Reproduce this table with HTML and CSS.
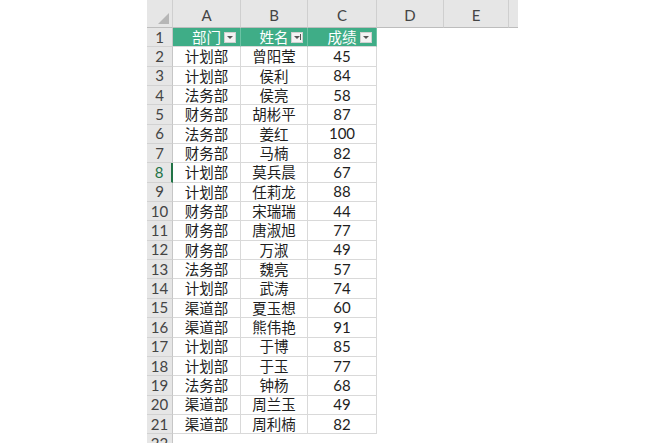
FILE: index.html
```html
<!DOCTYPE html>
<html lang="zh">
<head>
<meta charset="utf-8">
<link rel="stylesheet" href="styles.css">
</head>
<body>
<div class="sheet">
  <div class="corner"><span class="tri"></span></div>
  <div class="colh">A</div>
  <div class="colh">B</div>
  <div class="colh">C</div>
  <div class="colh">D</div>
  <div class="colh">E</div>
  <div class="colh stub"></div>

  <div class="rh">1</div>
  <div class="hd">部门<span class="fb"><span class="arr"></span></span></div>
  <div class="hd">姓名<span class="fb"><span class="arr"></span><span class="sort"></span></span></div>
  <div class="hd">成绩<span class="fb"><span class="arr"></span></span></div>
  <div class="void"></div>

  <div class="rh">2</div><div class="c">计划部</div><div class="c">曾阳莹</div><div class="c n">45</div><div class="void"></div>
  <div class="rh">3</div><div class="c">计划部</div><div class="c">侯利</div><div class="c n">84</div><div class="void"></div>
  <div class="rh">4</div><div class="c">法务部</div><div class="c">侯亮</div><div class="c n">58</div><div class="void"></div>
  <div class="rh">5</div><div class="c">财务部</div><div class="c">胡彬平</div><div class="c n">87</div><div class="void"></div>
  <div class="rh">6</div><div class="c">法务部</div><div class="c">姜红</div><div class="c n">100</div><div class="void"></div>
  <div class="rh">7</div><div class="c">财务部</div><div class="c">马楠</div><div class="c n">82</div><div class="void"></div>
  <div class="rh sel">8</div><div class="c">计划部</div><div class="c">莫兵晨</div><div class="c n">67</div><div class="void"></div>
  <div class="rh">9</div><div class="c">计划部</div><div class="c">任莉龙</div><div class="c n">88</div><div class="void"></div>
  <div class="rh">10</div><div class="c">财务部</div><div class="c">宋瑞瑞</div><div class="c n">44</div><div class="void"></div>
  <div class="rh">11</div><div class="c">财务部</div><div class="c">唐淑旭</div><div class="c n">77</div><div class="void"></div>
  <div class="rh">12</div><div class="c">财务部</div><div class="c">万淑</div><div class="c n">49</div><div class="void"></div>
  <div class="rh">13</div><div class="c">法务部</div><div class="c">魏亮</div><div class="c n">57</div><div class="void"></div>
  <div class="rh">14</div><div class="c">计划部</div><div class="c">武涛</div><div class="c n">74</div><div class="void"></div>
  <div class="rh">15</div><div class="c">渠道部</div><div class="c">夏玉想</div><div class="c n">60</div><div class="void"></div>
  <div class="rh">16</div><div class="c">渠道部</div><div class="c">熊伟艳</div><div class="c n">91</div><div class="void"></div>
  <div class="rh">17</div><div class="c">计划部</div><div class="c">于博</div><div class="c n">85</div><div class="void"></div>
  <div class="rh">18</div><div class="c">计划部</div><div class="c">于玉</div><div class="c n">77</div><div class="void"></div>
  <div class="rh">19</div><div class="c">法务部</div><div class="c">钟杨</div><div class="c n">68</div><div class="void"></div>
  <div class="rh">20</div><div class="c">渠道部</div><div class="c">周兰玉</div><div class="c n">49</div><div class="void"></div>
  <div class="rh">21</div><div class="c">渠道部</div><div class="c">周利楠</div><div class="c n">82</div><div class="void"></div>
  <div class="rh">22</div><div class="void3"></div>
</div>
</body>
</html>
```
FILE: styles.css
```css
html, body {
  margin: 0;
  padding: 0;
  background: #ffffff;
  overflow: hidden;
}
body {
  width: 664px;
  height: 443px;
}
.sheet {
  margin-left: 147px;
  display: grid;
  grid-template-columns: 26px 68px 67px 69px 67px 65px 9px;
  grid-template-rows: 28px repeat(22, 19.35px);
  font-family: Lato, "Noto Sans CJK SC", sans-serif;
  color: #222;
}
.sheet > div {
  box-sizing: border-box;
}
.corner {
  position: relative;
  background: #e6e6e6;
  border-right: 1px solid #cfcfcf;
  border-bottom: 1px solid #bdbdbd;
}
.tri {
  position: absolute;
  right: 3px;
  bottom: 3px;
  width: 0;
  height: 0;
  border-left: 11px solid transparent;
  border-bottom: 11px solid #b6b6b6;
}
.colh {
  background: #e6e6e6;
  border-right: 1px solid #cfcfcf;
  border-bottom: 1px solid #bdbdbd;
  font-size: 15px;
  color: #444;
  display: flex;
  align-items: flex-end;
  justify-content: center;
  padding-bottom: 3px;
}
.colh.stub {
  border-right: none;
}
.rh {
  background: #e6e6e6;
  border-right: 1px solid #c6c6c6;
  border-bottom: 1px solid #d2d2d2;
  font-size: 15px;
  color: #444;
  display: flex;
  align-items: center;
  justify-content: center;
  line-height: 1;
}
.rh.sel {
  color: #217346;
  border-right: 2px solid #217346;
}
.hd {
  position: relative;
  background: #3fad87;
  color: #ffffff;
  border-right: 1px solid #6cc2a4;
  border-bottom: 1px solid #d9d9d9;
  font-family: "Noto Sans CJK SC", sans-serif;
  font-size: 14.5px;
  display: flex;
  align-items: center;
  justify-content: center;
  line-height: 1;
}
.fb {
  position: absolute;
  right: 4px;
  top: 4px;
  width: 12px;
  height: 11px;
  box-sizing: border-box;
  background: #f3f3f3;
  border: 1px solid #d0d0d0;
}
.arr {
  position: absolute;
  left: 2px;
  top: 3px;
  width: 0;
  height: 0;
  border-left: 3px solid transparent;
  border-right: 3px solid transparent;
  border-top: 3px solid #555;
}
.sort {
  position: absolute;
  right: 1px;
  top: 1px;
  width: 1px;
  height: 6px;
  background: #555;
}
.c {
  border-right: 1px solid #d9d9d9;
  border-bottom: 1px solid #d9d9d9;
  font-family: "Noto Sans CJK SC", sans-serif;
  font-size: 14.5px;
  color: #1e1e1e;
  display: flex;
  align-items: center;
  justify-content: center;
  line-height: 1;
}
.c.n {
  font-family: Lato, sans-serif;
  font-size: 15px;
}
.void {
  grid-column: span 3;
}
.void3 {
  grid-column: span 6;
}
```
